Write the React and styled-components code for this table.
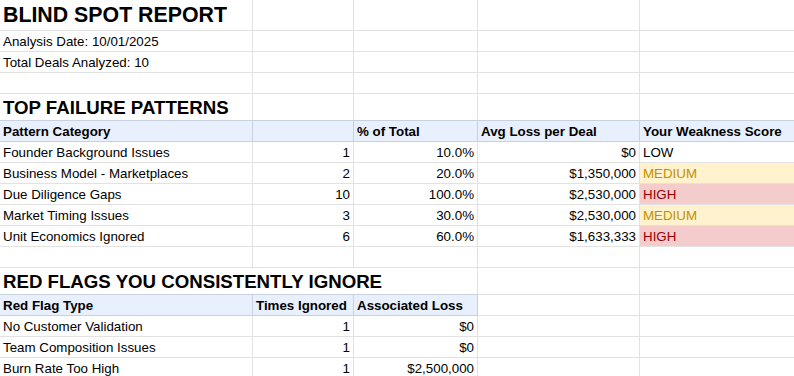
import React from "react";
import styled, { createGlobalStyle, css } from "styled-components";

const Global = createGlobalStyle`
  html, body { margin: 0; padding: 0; background: #fff; overflow: hidden; }
  body { font-family: "Liberation Sans", Arial, sans-serif; color: #000; }
`;

const Sheet = styled.div`
  display: flex;
  flex-direction: column;
  width: 800px;
`;

const Row = styled.div`
  display: grid;
  grid-template-columns: 253px 101px 124px 162px 160px;
  height: ${(p) => p.$h || 21}px;
`;

const tones = {
  medium: css`background: #fff2cc; color: #bf9000;`,
  high: css`background: #f4cccc; color: #990000;`,
};

const Cell = styled.div`
  box-sizing: border-box;
  display: flex;
  align-items: flex-end;
  justify-content: ${(p) => (p.$right ? "flex-end" : "flex-start")};
  padding: 0 3px 2px 3px;
  border-right: 1px solid #e2e2e2;
  border-bottom: 1px solid #e2e2e2;
  font-size: 13.33px;
  line-height: 15px;
  white-space: nowrap;
  grid-column: span ${(p) => p.$span || 1};
  ${(p) => p.$tone && tones[p.$tone]}
  ${(p) =>
    p.$head &&
    css`
      background: #e8f0fe;
      font-weight: bold;
      border-right-color: #c8d1de;
      border-bottom-color: #c8d1de;
      box-shadow: 0 -1px 0 #c8d1de;
    `}
`;

const Title = styled.span`
  font-size: 21.33px;
  font-weight: bold;
  line-height: 24px;
  margin-bottom: 1px;
`;

const Heading = styled.span`
  font-size: 18.67px;
  font-weight: bold;
  line-height: 21px;
`;

const Empty = ({ n }) =>
  Array.from({ length: n }).map((_, i) => <Cell key={i} />);

const patterns = [
  ["Founder Background Issues", "1", "10.0%", "$0", "LOW", null],
  ["Business Model - Marketplaces", "2", "20.0%", "$1,350,000", "MEDIUM", "medium"],
  ["Due Diligence Gaps", "10", "100.0%", "$2,530,000", "HIGH", "high"],
  ["Market Timing Issues", "3", "30.0%", "$2,530,000", "MEDIUM", "medium"],
  ["Unit Economics Ignored", "6", "60.0%", "$1,633,333", "HIGH", "high"],
];

const flags = [
  ["No Customer Validation", "1", "$0"],
  ["Team Composition Issues", "1", "$0"],
  ["Burn Rate Too High", "1", "$2,500,000"],
];

export default function App() {
  return (
    <>
      <Global />
      <Sheet>
        <Row $h={31}>
          <Cell><Title>BLIND SPOT REPORT</Title></Cell>
          <Empty n={4} />
        </Row>
        <Row>
          <Cell>Analysis Date: 10/01/2025</Cell>
          <Empty n={4} />
        </Row>
        <Row>
          <Cell>Total Deals Analyzed: 10</Cell>
          <Empty n={4} />
        </Row>
        <Row>
          <Empty n={5} />
        </Row>
        <Row $h={27}>
          <Cell><Heading>TOP FAILURE PATTERNS</Heading></Cell>
          <Empty n={4} />
        </Row>
        <Row>
          <Cell $head>Pattern Category</Cell>
          <Cell $head />
          <Cell $head>% of Total</Cell>
          <Cell $head>Avg Loss per Deal</Cell>
          <Cell $head>Your Weakness Score</Cell>
        </Row>
        {patterns.map((r) => (
          <Row key={r[0]}>
            <Cell>{r[0]}</Cell>
            <Cell $right>{r[1]}</Cell>
            <Cell $right>{r[2]}</Cell>
            <Cell $right>{r[3]}</Cell>
            <Cell $tone={r[5]}>{r[4]}</Cell>
          </Row>
        ))}
        <Row>
          <Empty n={5} />
        </Row>
        <Row $h={27}>
          <Cell $span={3}><Heading>RED FLAGS YOU CONSISTENTLY IGNORE</Heading></Cell>
          <Empty n={2} />
        </Row>
        <Row>
          <Cell $head>Red Flag Type</Cell>
          <Cell $head>Times Ignored</Cell>
          <Cell $head>Associated Loss</Cell>
          <Cell />
          <Cell />
        </Row>
        {flags.map((r) => (
          <Row key={r[0]}>
            <Cell>{r[0]}</Cell>
            <Cell $right>{r[1]}</Cell>
            <Cell $right>{r[2]}</Cell>
            <Cell />
            <Cell />
          </Row>
        ))}
      </Sheet>
    </>
  );
}
